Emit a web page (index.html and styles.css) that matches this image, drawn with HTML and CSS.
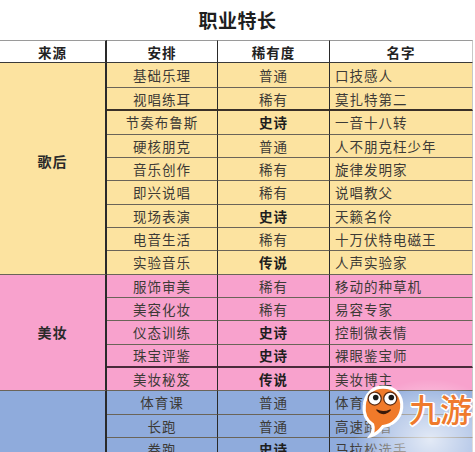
FILE: index.html
```html
<!DOCTYPE html>
<html lang="zh">
<head>
<meta charset="utf-8">
<link rel="stylesheet" href="styles.css">
</head>
<body>
<div class="page">
  <h1 class="title">职业特长</h1>
  <div class="table">
    <div class="cell head c1">来源</div>
    <div class="cell head">安排</div>
    <div class="cell head">稀有度</div>
    <div class="cell head last">名字</div>

    <div class="cell group yellow g-song">歌后</div>
    <div class="cell yellow first">基础乐理</div><div class="cell yellow first">普通</div><div class="cell yellow name first last">口技感人</div>
    <div class="cell yellow thick">视唱练耳</div><div class="cell yellow thick">稀有</div><div class="cell yellow name thick last">莫扎特第二</div>
    <div class="cell yellow">节奏布鲁斯</div><div class="cell yellow b">史诗</div><div class="cell yellow name last">一音十八转</div>
    <div class="cell yellow">硬核朋克</div><div class="cell yellow">普通</div><div class="cell yellow name last">人不朋克枉少年</div>
    <div class="cell yellow">音乐创作</div><div class="cell yellow">稀有</div><div class="cell yellow name last">旋律发明家</div>
    <div class="cell yellow">即兴说唱</div><div class="cell yellow">稀有</div><div class="cell yellow name last">说唱教父</div>
    <div class="cell yellow">现场表演</div><div class="cell yellow b">史诗</div><div class="cell yellow name last">天籁名伶</div>
    <div class="cell yellow">电音生活</div><div class="cell yellow">稀有</div><div class="cell yellow name last">十万伏特电磁王</div>
    <div class="cell yellow">实验音乐</div><div class="cell yellow b">传说</div><div class="cell yellow name last">人声实验家</div>

    <div class="cell group pink g-makeup">美妆</div>
    <div class="cell pink">服饰审美</div><div class="cell pink">稀有</div><div class="cell pink name last">移动的种草机</div>
    <div class="cell pink">美容化妆</div><div class="cell pink">稀有</div><div class="cell pink name last">易容专家</div>
    <div class="cell pink">仪态训练</div><div class="cell pink b">史诗</div><div class="cell pink name last">控制微表情</div>
    <div class="cell pink thick">珠宝评鉴</div><div class="cell pink b thick">史诗</div><div class="cell pink name thick last">裸眼鉴宝师</div>
    <div class="cell pink">美妆秘笈</div><div class="cell pink b">传说</div><div class="cell pink name last">美妆博主</div>

    <div class="cell group blue g-sport"></div>
    <div class="cell blue">体育课</div><div class="cell blue">普通</div><div class="cell blue name last">体育达人</div>
    <div class="cell blue">长跑</div><div class="cell blue">普通</div><div class="cell blue name last">高速跑者</div>
    <div class="cell blue">卷跑</div><div class="cell blue b">史诗</div><div class="cell blue name last">马拉松选手</div>
  </div>

  <div class="watermark">
    <svg class="mascot" viewBox="0 0 44 54" width="46" height="56">
      <path d="M22 4 C34 4 41 12 40 24 C39 34 31 41 22 42 C19 46 15 50 10 51 C13 47 13 43 12 40 C6 36 3 29 4 21 C5 11 12 4 22 4 Z" fill="#f07a2a" stroke="#fff" stroke-width="3"/>
      <circle cx="14" cy="15" r="6.3" fill="#fff" stroke="#5a2a10" stroke-width="1.2"/>
      <circle cx="29" cy="15" r="6.3" fill="#fff" stroke="#5a2a10" stroke-width="1.2"/>
      <circle cx="15" cy="14" r="2.7" fill="#1a1a1a"/>
      <circle cx="30" cy="14" r="2.7" fill="#1a1a1a"/>
      <path d="M16 26 Q22 33 29 26 Q22 29 16 26 Z" fill="#3a1a0a" stroke="#3a1a0a" stroke-width="1.2" stroke-linejoin="round"/>
    </svg>
    <span class="brand">九游</span>
  </div>
</div>
</body>
</html>
```

FILE: styles.css
```css
* { box-sizing: border-box; }
html, body { margin: 0; padding: 0; background: #fff; }
body {
  font-family: "Noto Sans CJK SC", "Noto Sans", sans-serif;
  width: 475px;
  height: 452px;
  overflow: hidden;
}
.page { position: relative; width: 475px; height: 452px; overflow: hidden; }
.title {
  margin: 0;
  height: 40px;
  line-height: 40px;
  text-align: center;
  font-size: 19px;
  font-weight: 700;
  color: #1e1e1e;
  letter-spacing: 0.5px;
}
.table {
  display: grid;
  grid-template-columns: 107px 111px 112px 143px;
  grid-template-rows: 23px 25px repeat(16, 23.33px);
  width: 473px;
}
.cell {
  display: flex;
  align-items: center;
  justify-content: center;
  font-size: 13.5px;
  color: #3c3a36;
  border-bottom: 1px solid #6a6458;
  border-right: 1px solid #2a2a2a;
  white-space: nowrap;
  overflow: hidden;
  letter-spacing: 1px;
}
.cell.last { border-right: 1px solid #c8c8c8; }
.head {
  background: #fff;
  font-weight: 700;
  color: #222;
  border-top: 1px solid #9a9a9a;
  border-bottom: 1px solid #3a3a3a;
  font-size: 13.5px;
}
.c1 { border-right: 2px solid #2a2a2a; }
.group {
  grid-column: 1;
  border-right: 2px solid #2a2a2a;
  font-weight: 700;
  color: #2a2a2a;
  font-size: 14px;
  padding-bottom: 14px;
}
.g-song { grid-row: 2 / span 9; }
.g-makeup { grid-row: 11 / span 5; padding-bottom: 0; }
.g-sport { grid-row: 16 / span 3; }
.yellow { background: #fce3a0; }
.pink { background: #f8a2cd; }
.blue { background: #8fabdc; }
.name { justify-content: flex-start; padding-left: 5px; }
.b { font-weight: 700; color: #1e1e1e; }
.thick { border-bottom: 2px solid #3a3028; }
.pink.thick { border-bottom: 2px solid #4a2a3a; }

.watermark {
  position: absolute;
  left: 355px;
  top: 380px;
  width: 125px;
  height: 80px;
  display: flex;
  align-items: flex-start;
  gap: 3px;
  padding: 3px 0 0 5px;
  background: radial-gradient(ellipse at 60% 75%, rgba(255,255,255,0.75) 0%, rgba(255,255,255,0.35) 45%, rgba(255,255,255,0) 72%);
}
.mascot { display: block; flex: none; }
.brand {
  font-family: "Noto Sans CJK SC", sans-serif;
  font-size: 32px;
  font-weight: 500;
  line-height: 34px;
  margin-top: 8px;
  color: #ef7a2c;
  letter-spacing: -1px;
  text-shadow: 1px 1px 0 #fff, -1px -1px 0 #fff, 1px -1px 0 #fff, -1px 1px 0 #fff, 0 2px 0 #fff, 2px 0 0 #fff;
}
```
